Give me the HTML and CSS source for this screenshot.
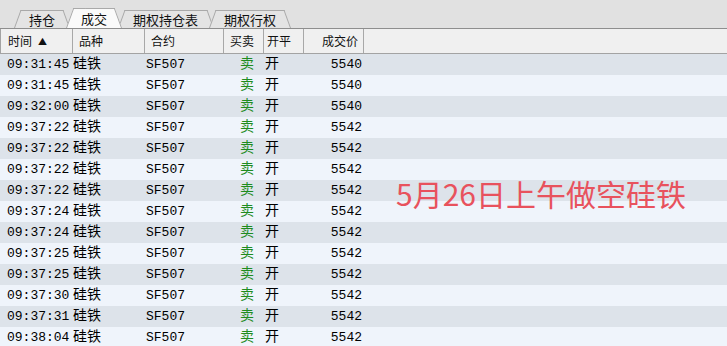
FILE: index.html
```html
<!DOCTYPE html>
<html lang="zh-CN">
<head>
  <meta charset="UTF-8">
  <title>成交</title>
  <link rel="stylesheet" href="styles.css">
</head>
<body>
  <div class="tabs">
    <div class="tab">持仓</div>
    <div class="tab active">成交</div>
    <div class="tab">期权持仓表</div>
    <div class="tab">期权行权</div>
  </div>

  <div class="grid">
    <div class="row head">
      <div class="c-time">时间<span class="sort">▲</span></div>
      <div class="c-kind">品种</div>
      <div class="c-code">合约</div>
      <div class="c-side">买卖</div>
      <div class="c-open">开平</div>
      <div class="c-price">成交价</div>
      <div></div>
    </div>

    <div class="row"><div class="c-time">09:31:45</div><div class="c-kind">硅铁</div><div class="c-code">SF507</div><div class="c-side">卖</div><div class="c-open">开</div><div class="c-price">5540</div><div></div></div>
    <div class="row"><div class="c-time">09:31:45</div><div class="c-kind">硅铁</div><div class="c-code">SF507</div><div class="c-side">卖</div><div class="c-open">开</div><div class="c-price">5540</div><div></div></div>
    <div class="row"><div class="c-time">09:32:00</div><div class="c-kind">硅铁</div><div class="c-code">SF507</div><div class="c-side">卖</div><div class="c-open">开</div><div class="c-price">5540</div><div></div></div>
    <div class="row"><div class="c-time">09:37:22</div><div class="c-kind">硅铁</div><div class="c-code">SF507</div><div class="c-side">卖</div><div class="c-open">开</div><div class="c-price">5542</div><div></div></div>
    <div class="row"><div class="c-time">09:37:22</div><div class="c-kind">硅铁</div><div class="c-code">SF507</div><div class="c-side">卖</div><div class="c-open">开</div><div class="c-price">5542</div><div></div></div>
    <div class="row"><div class="c-time">09:37:22</div><div class="c-kind">硅铁</div><div class="c-code">SF507</div><div class="c-side">卖</div><div class="c-open">开</div><div class="c-price">5542</div><div></div></div>
    <div class="row"><div class="c-time">09:37:22</div><div class="c-kind">硅铁</div><div class="c-code">SF507</div><div class="c-side">卖</div><div class="c-open">开</div><div class="c-price">5542</div><div></div></div>
    <div class="row"><div class="c-time">09:37:24</div><div class="c-kind">硅铁</div><div class="c-code">SF507</div><div class="c-side">卖</div><div class="c-open">开</div><div class="c-price">5542</div><div></div></div>
    <div class="row"><div class="c-time">09:37:24</div><div class="c-kind">硅铁</div><div class="c-code">SF507</div><div class="c-side">卖</div><div class="c-open">开</div><div class="c-price">5542</div><div></div></div>
    <div class="row"><div class="c-time">09:37:25</div><div class="c-kind">硅铁</div><div class="c-code">SF507</div><div class="c-side">卖</div><div class="c-open">开</div><div class="c-price">5542</div><div></div></div>
    <div class="row"><div class="c-time">09:37:25</div><div class="c-kind">硅铁</div><div class="c-code">SF507</div><div class="c-side">卖</div><div class="c-open">开</div><div class="c-price">5542</div><div></div></div>
    <div class="row"><div class="c-time">09:37:30</div><div class="c-kind">硅铁</div><div class="c-code">SF507</div><div class="c-side">卖</div><div class="c-open">开</div><div class="c-price">5542</div><div></div></div>
    <div class="row"><div class="c-time">09:37:31</div><div class="c-kind">硅铁</div><div class="c-code">SF507</div><div class="c-side">卖</div><div class="c-open">开</div><div class="c-price">5542</div><div></div></div>
    <div class="row"><div class="c-time">09:38:04</div><div class="c-kind">硅铁</div><div class="c-code">SF507</div><div class="c-side">卖</div><div class="c-open">开</div><div class="c-price">5542</div><div></div></div>

    <div class="note">5月26日上午做空硅铁</div>
  </div>
</body>
</html>
```

FILE: styles.css
```css
* {
  box-sizing: border-box;
}

body {
  margin: 0;
  height: 346px;
  overflow: hidden;
  background: #eff4fb;
  font-family: "Noto Sans CJK SC", sans-serif;
  color: #000;
}

/* tab strip */
.tabs {
  display: flex;
  align-items: flex-end;
  height: 29px;
  padding-left: 14px;
  background: #e1e1e1;
  border-bottom: 1px solid #8e8e8e;
}

.tab {
  position: relative;
  z-index: 1;
  height: 18px;
  padding: 0 15px;
  margin-right: -4px;
  font-size: 13px;
  line-height: 19px;
  color: #111;
}

.tab::before,
.tab::after {
  content: '';
  position: absolute;
  top: 0;
  bottom: 0;
  width: 50%;
  background: #e4e4e4;
  border-top: 1px solid #a9a9a9;
  z-index: -1;
  transform-origin: bottom;
}

.tab::before {
  left: 0;
  border-left: 1px solid #a9a9a9;
  transform: skewX(-20deg);
}

.tab::after {
  right: 0;
  border-right: 1px solid #a9a9a9;
  transform: skewX(20deg);
}

.tab.active {
  z-index: 2;
  height: 20px;
  line-height: 22px;
}

.tab.active::before,
.tab.active::after {
  background: #fafafa;
}

/* table */
.grid {
  position: relative;
}

.row {
  display: grid;
  grid-template-columns: 72px 72px 79px 40px 40px 60px 1fr;
  height: 21px;
  line-height: 21px;
  font-family: "Liberation Mono", "Noto Sans CJK SC", monospace;
  font-size: 13px;
  white-space: nowrap;
}

.row:nth-child(even) {
  background: #dde3ea;
}

.row:nth-child(odd) {
  background: #eff4fb;
}

.row.head {
  height: 25px;
  line-height: 23px;
  background: #f0f0f0;
  border-bottom: 1px solid #a3a3a3;
  border-left: 1px solid #a3a3a3;
  font-family: "Noto Sans CJK SC", sans-serif;
  font-size: 12px;
  color: #111;
}

.row.head > div {
  border-right: 1px solid #a8a8a8;
}

.row.head > div:last-child {
  border-right: none;
}

.sort {
  font-size: 9px;
  margin-left: 6px;
  vertical-align: 1px;
}

.c-time { padding-left: 7px; }
.c-kind { padding-left: 1px; font-size: 14px; }
.c-code { padding-left: 2px; }
.c-side { padding-left: 17px; color: #1e8c1e; font-size: 14px; }
.c-open { padding-left: 2px; font-size: 14px; }
.c-price { text-align: right; padding-right: 1px; }

.head .c-time { padding-left: 7px; }
.head .c-kind { padding-left: 6px; font-size: 12px; }
.head .c-code { padding-left: 6px; }
.head .c-side { padding-left: 6px; color: #111; font-size: 12px; }
.head .c-open { padding-left: 3px; font-size: 12px; }
.head .c-price { padding-right: 5px; }

.note {
  position: absolute;
  left: 396px;
  top: 149px;
  font-size: 30px;
  line-height: 30px;
  color: #e8525d;
  white-space: nowrap;
}
```
